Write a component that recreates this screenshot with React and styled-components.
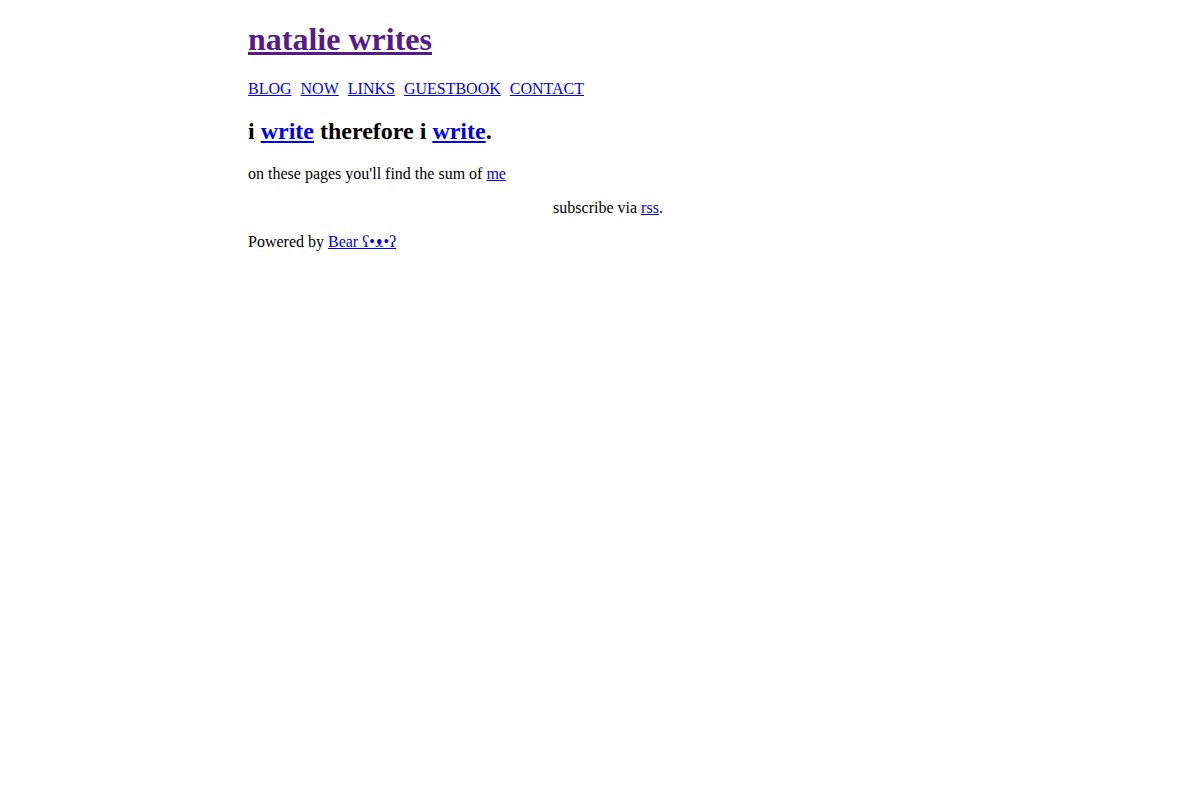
import styled, { createGlobalStyle } from "styled-components";

const Global = createGlobalStyle`
    body {
        margin: 0;
        background: #fff;
        color: #000;
        font-family: "Liberation Serif", "Times New Roman", serif;
        font-size: 16px;
    }
`

const Pagina = styled.div`
    width: 720px;
    margin: 0 0 0 248px;
    padding-top: 21px;
`

const Cabecalho = styled.header`
    display: flex;
    flex-direction: column;
    gap: 22px;
`

const Titulo = styled.h1`
    margin: 0;
    font-size: 32px;
    font-weight: 700;

    a {
        color: #551a8b;
    }
`

const Menu = styled.nav`
    display: flex;
    gap: 9px;
`

const Link = styled.a`
    color: ${({ $visitado }) => ($visitado ? "#551a8b" : "#0000ee")};
    text-decoration: underline;
`

const Conteudo = styled.main`
    margin-top: 20px;
`

const Chamada = styled.h2`
    margin: 0;
    font-size: 24px;
    font-weight: 700;
`

const Texto = styled.p`
    margin: 20px 0 0;
`

const Rodape = styled.footer`
    margin-top: 16px;
    display: flex;
    flex-direction: column;
    gap: 16px;
`

const Assinatura = styled.p`
    margin: 0;
    text-align: ${({ $centro }) => ($centro ? "center" : "left")};
`

const itens = ["BLOG", "NOW", "LINKS", "GUESTBOOK", "CONTACT"];

const App = () => {
    return (
        <>
            <Global />
            <Pagina>
                <Cabecalho>
                    <Titulo>
                        <Link href="#" $visitado>natalie writes</Link>
                    </Titulo>
                    <Menu>
                        {itens.map((item) => (
                            <Link key={item} href="#">{item}</Link>
                        ))}
                    </Menu>
                </Cabecalho>
                <Conteudo>
                    <Chamada>
                        i <Link href="#">write</Link> therefore i <Link href="#">write</Link>.
                    </Chamada>
                    <Texto>
                        on these pages you'll find the sum of <Link href="#">me</Link>
                    </Texto>
                </Conteudo>
                <Rodape>
                    <Assinatura $centro>
                        subscribe via <Link href="#">rss</Link>.
                    </Assinatura>
                    <Assinatura>
                        Powered by <Link href="#">Bear ʕ•ᴥ•ʔ</Link>
                    </Assinatura>
                </Rodape>
            </Pagina>
        </>
    );
}

export default App
